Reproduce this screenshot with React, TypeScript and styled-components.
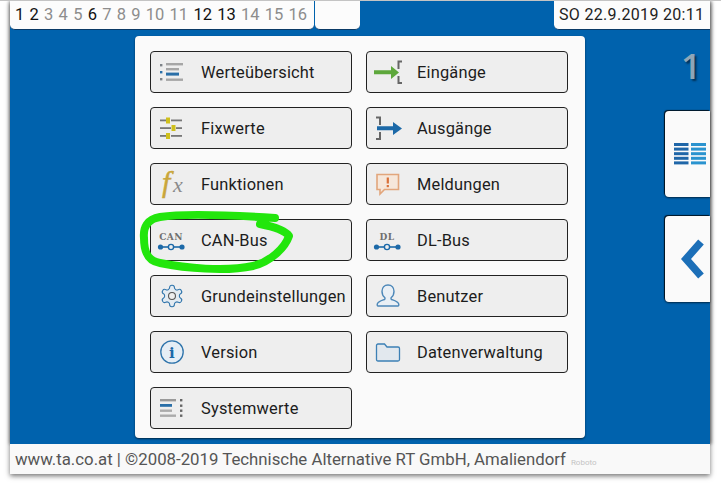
import styled, { createGlobalStyle } from 'styled-components'
import type { ReactNode } from 'react'

const Global = createGlobalStyle`
  html, body { margin: 0; padding: 0; background: #fff; }
  body { font-family: Roboto, 'Liberation Sans', sans-serif; }
`

const Page = styled.div`
  width: 721px;
  height: 486px;
  overflow: hidden;
  position: relative;
  background: #fff;
  border-top: 1px solid #c4c4c4;
  box-sizing: border-box;
`

const Device = styled.div`
  width: 700px;
  margin-left: 10px;
  box-shadow: 0 2px 5px rgba(0, 0, 0, 0.55);
`

const Screen = styled.div`
  height: 443px;
  background: #0062ad;
  display: flex;
  flex-direction: column;
  box-shadow: -1px 0 3px rgba(0, 0, 0, 0.3), 2px 0 3px rgba(0, 0, 0, 0.35);
`

const TopBar = styled.div`
  display: flex;
  height: 29px;
  gap: 1px;
  flex-shrink: 0;
`

const Tab = styled.div<{ $w: number }>`
  width: ${p => p.$w}px;
  box-sizing: border-box;
  background: #fcfcfc;
  border-radius: 0 0 5px 5px;
  border-bottom: 1px solid #0a3a66;
  display: flex;
  align-items: center;
  padding: 0 0 2px 5px;
  font-size: 16.5px;
  gap: 5.25px;
  color: #111;
`

const PageNo = styled.span<{ $on?: boolean }>`
  color: ${p => (p.$on ? '#111' : '#8d8d8d')};
`

const DateTab = styled(Tab)`
  margin-left: auto;
  padding-left: 5px;
  font-size: 16px;
  letter-spacing: 0.02em;
  color: #222;
  border-radius: 0 0 0 5px;
`

const Body = styled.div`
  flex: 1;
  display: flex;
  padding-top: 6px;
`

const Panel = styled.div`
  margin-left: 125px;
  width: 450px;
  height: 402px;
  box-sizing: border-box;
  background: #fafafa;
  border-radius: 4px;
  box-shadow: 0 1px 2px rgba(0, 0, 0, 0.6);
  padding: 15px;
  display: grid;
  grid-template-columns: 202px 202px;
  grid-auto-rows: 42px;
  column-gap: 14px;
  row-gap: 14px;
`

const MenuButton = styled.div`
  box-sizing: border-box;
  background: #eeeeee;
  border: 1px solid #222;
  border-radius: 4px;
  display: flex;
  align-items: center;
  font-size: 16.4px;
  letter-spacing: 0.012em;
  color: #1c1c1c;
  white-space: nowrap;
`

const IconSlot = styled.span`
  width: 42px;
  height: 40px;
  margin-right: 8px;
  flex-shrink: 0;
  display: flex;
  align-items: center;
  justify-content: center;

  svg { overflow: visible; }
`

const Side = styled.div`
  margin-left: auto;
  width: 46px;
  display: flex;
  flex-direction: column;
  align-items: flex-end;
`

const SideNumber = styled.div`
  width: 46px;
  height: 75px;
  box-sizing: border-box;
  padding: 10px 9px 0 0;
  text-align: right;
  font-size: 35px;
  font-weight: 600;
  line-height: 40px;
  color: #8fa6b8;
  font-family: 'Open Sans', Roboto, sans-serif;
  text-shadow: 2px 2px 2px rgba(0, 0, 0, 0.5);
`

const SideButton = styled.div<{ $inset: number }>`
  width: 45px;
  height: 86px;
  box-sizing: border-box;
  padding-left: ${p => p.$inset}px;
  margin-bottom: 19px;
  background: #fafafa;
  border-radius: 4px 0 0 4px;
  box-shadow: -1px -1px 1px rgba(0, 0, 0, 0.8), 0 1px 2px rgba(0, 0, 0, 0.6);
  display: flex;
  align-items: center;
  justify-content: center;
`

const Footer = styled.div`
  height: 30px;
  box-sizing: border-box;
  background: #f9f9f9;
  display: flex;
  align-items: baseline;
  padding: 5px 0 0 5px;
  font-size: 16.8px;
  color: #555;
  white-space: nowrap;
`

const FooterNote = styled.span`
  margin-left: 5px;
  font-size: 8px;
  color: #c4c4c4;
`

const Scribble = styled.svg`
  position: absolute;
  left: 135px;
  top: 205px;
  pointer-events: none;
`

const ListIcon = () => (
  <svg width="32" height="24" viewBox="0 0 32 24">
    <g fill="#7d8388">
      <rect x="4" y="4" width="2.4" height="2.4" />
      <rect x="4" y="11" width="2.4" height="2.4" fill="#2a6fa8" />
      <rect x="4" y="18" width="2.4" height="2.4" />
    </g>
    <rect x="10" y="3" width="17" height="2.4" fill="#a6a6a6" />
    <rect x="10" y="8" width="13" height="2.4" fill="#a6a6a6" />
    <rect x="10" y="12.6" width="13" height="3" fill="#2a6fa8" />
    <rect x="10" y="18.5" width="17" height="2.4" fill="#a6a6a6" />
  </svg>
)

const SlidersIcon = () => (
  <svg width="32" height="24" viewBox="0 0 32 24">
    <g fill="#777">
      <rect x="4" y="3.5" width="6" height="1.8" /><rect x="15" y="3.5" width="11" height="1.8" />
      <rect x="4" y="11.2" width="11" height="1.8" /><rect x="20" y="11.2" width="6" height="1.8" />
      <rect x="4" y="19" width="6" height="1.8" /><rect x="15" y="19" width="11" height="1.8" />
    </g>
    <g fill="#cfc01c">
      <rect x="10" y="1.5" width="4" height="6" /><rect x="15.5" y="9" width="4" height="6" /><rect x="10" y="17" width="4" height="6" />
    </g>
  </svg>
)

const FxIcon = () => (
  <svg width="36" height="34" viewBox="0 0 36 34">
    <text x="8" y="25" fontFamily="'Liberation Serif', serif" fontStyle="italic" fontSize="30" fill="#c9a63a" stroke="#c9a63a" strokeWidth="0.5">f</text>
    <text x="19" y="25" fontFamily="'Liberation Serif', serif" fontStyle="italic" fontSize="22" fill="#8b8b8b">x</text>
  </svg>
)

const BusIcon = ({ label }: { label: string }) => (
  <svg width="32" height="28" viewBox="0 0 32 28">
    <text x="15" y="14" textAnchor="middle" fontFamily="'DejaVu Serif', serif" fontWeight="bold" fontSize="9" letterSpacing="0.4" fill="#6f6f6f">{label}</text>
    <line x1="4" y1="21" x2="26" y2="21" stroke="#1c69a8" strokeWidth="1.6" />
    <circle cx="4.5" cy="21" r="2.6" fill="#1c69a8" />
    <circle cx="26" cy="21" r="2.6" fill="#1c69a8" />
    <circle cx="15" cy="21" r="2.6" fill="#eee" stroke="#1c69a8" strokeWidth="1.4" />
  </svg>
)

const GearIcon = () => (
  <svg width="26" height="26" viewBox="0 0 24 24" fill="#e3ebf2" stroke="#2f74ab" strokeWidth="1" strokeLinejoin="round">
    <path d="M12.2 2h-.4a2 2 0 0 0-2 2v.2a2 2 0 0 1-1 1.7l-.4.3a2 2 0 0 1-2 0l-.2-.1a2 2 0 0 0-2.7.7l-.2.4a2 2 0 0 0 .7 2.7l.2.1a2 2 0 0 1 1 1.7v.5a2 2 0 0 1-1 1.7l-.2.1a2 2 0 0 0-.7 2.7l.2.4a2 2 0 0 0 2.7.7l.2-.1a2 2 0 0 1 2 0l.4.3a2 2 0 0 1 1 1.7v.2a2 2 0 0 0 2 2h.4a2 2 0 0 0 2-2v-.2a2 2 0 0 1 1-1.7l.4-.3a2 2 0 0 1 2 0l.2.1a2 2 0 0 0 2.7-.7l.2-.4a2 2 0 0 0-.7-2.7l-.2-.1a2 2 0 0 1-1-1.7v-.5a2 2 0 0 1 1-1.7l.2-.1a2 2 0 0 0 .7-2.7l-.2-.4a2 2 0 0 0-2.7-.7l-.2.1a2 2 0 0 1-2 0l-.4-.3a2 2 0 0 1-1-1.7V4a2 2 0 0 0-2-2Z" />
    <circle cx="12" cy="12" r="3.2" fill="#eee" stroke="#555" />
  </svg>
)

const InfoIcon = () => (
  <svg width="26" height="26" viewBox="0 0 26 26">
    <circle cx="13" cy="13" r="11.2" fill="#e6eef5" stroke="#2f74ab" strokeWidth="1.3" />
    <text x="13" y="19" textAnchor="middle" fontFamily="'DejaVu Serif', serif" fontWeight="bold" fontSize="15" fill="#1c69a8">i</text>
  </svg>
)

const SystemIcon = () => (
  <svg width="32" height="24" viewBox="0 0 32 24">
    <rect x="4" y="3" width="16" height="2.4" fill="#999" />
    <rect x="4" y="8" width="12" height="2.8" fill="#2a6fa8" />
    <rect x="4" y="13.5" width="12" height="2.4" fill="#aaa" />
    <rect x="4" y="18.5" width="16" height="2.4" fill="#aaa" />
    <g fill="#666">
      <rect x="24" y="3" width="2.4" height="2.4" /><rect x="24" y="8.5" width="2.4" height="2.4" />
      <rect x="24" y="13.5" width="2.4" height="2.4" /><rect x="24" y="18.5" width="2.4" height="2.4" />
    </g>
  </svg>
)

const InIcon = () => (
  <svg width="36" height="28" viewBox="0 0 36 28">
    <path d="M32 3.5h-3.5V11M28.5 18v7h3.5" fill="none" stroke="#666" strokeWidth="2" />
    <path d="M4 12.3h17V8l8 6.5-8 6.5v-4.7H4Z" fill="#5ea83c" />
  </svg>
)

const OutIcon = () => (
  <svg width="36" height="28" viewBox="0 0 36 28">
    <path d="M6 3.5h4V11M10 18v7H6" fill="none" stroke="#666" strokeWidth="2" />
    <path d="M7 12.3h16V8l9 6.5-9 6.5v-4.700H7Z" fill="#1c69a8" />
  </svg>
)

const MessageIcon = () => (
  <svg width="28" height="26" viewBox="0 0 28 26">
    <path d="M3 3.5h21.5v15H10.500L6 23v-4.500H3Z" fill="#f6e7da" stroke="#e2a67c" strokeWidth="1.6" />
    <rect x="12.7" y="6.5" width="2.2" height="6" fill="#d9713a" />
    <rect x="12.7" y="14" width="2.2" height="2.2" fill="#d9713a" />
  </svg>
)

const UserIcon = () => (
  <svg width="28" height="28" viewBox="0 0 28 28">
    <path d="M14 3c3.6 0 6 2.6 6 6.3 0 2.6-1.2 5-2.7 6.2-.5.5-.4 1.600.4 2 2.600 1 6 2 6.800 4 .5 1.200.4 2.500-.4 2.500H3.900c-.8 0-.9-1.300-.4-2.500.8-2 4.200-3 6.800-4 .8-.4.9-1.500.4-2C9.200 14.300 8 11.900 8 9.300 8 5.600 10.400 3 14 3Z" fill="#e9eff5" stroke="#4c87b8" strokeWidth="1.4" />
  </svg>
)

const FolderIcon = () => (
  <svg width="28" height="24" viewBox="0 0 28 24">
    <path d="M2.500 5.500c0-1 .6-1.500 1.500-1.500h6.500l2.500 3h11c1 0 1.500.6 1.500 1.500v11c0 1-.6 1.500-1.500 1.500H4c-1 0-1.500-.6-1.500-1.500Z" fill="#e2e8ee" stroke="#3d80b5" strokeWidth="1.3" />
  </svg>
)

const GridIcon = () => (
  <svg width="32" height="22" viewBox="0 0 32 22">
    {[0, 4.6, 9.2, 13.8, 18.4].map(y => (
      <g key={y}>
        <rect x="0" y={y} width="14.5" height="3" fill="#1f66a8" />
        <rect x="17" y={y} width="15" height="3" fill="#2a93cf" />
      </g>
    ))}
  </svg>
)

const ChevronIcon = () => (
  <svg width="26" height="40" viewBox="0 0 26 40">
    <path d="M21 3 6 20l15 17" fill="none" stroke="#1c6fb8" strokeWidth="7.5" />
  </svg>
)

const ACTIVE_PAGES = [1, 2, 6, 12, 13]

const menu: { label: string; icon: ReactNode }[] = [
  { label: 'Werteübersicht', icon: <ListIcon /> },
  { label: 'Eingänge', icon: <InIcon /> },
  { label: 'Fixwerte', icon: <SlidersIcon /> },
  { label: 'Ausgänge', icon: <OutIcon /> },
  { label: 'Funktionen', icon: <FxIcon /> },
  { label: 'Meldungen', icon: <MessageIcon /> },
  { label: 'CAN-Bus', icon: <BusIcon label="CAN" /> },
  { label: 'DL-Bus', icon: <BusIcon label="DL" /> },
  { label: 'Grundeinstellungen', icon: <GearIcon /> },
  { label: 'Benutzer', icon: <UserIcon /> },
  { label: 'Version', icon: <InfoIcon /> },
  { label: 'Datenverwaltung', icon: <FolderIcon /> },
  { label: 'Systemwerte', icon: <SystemIcon /> },
]

export default function App() {
  return (
    <Page>
      <Global />
      <Device>
        <Screen>
          <TopBar>
            <Tab $w={304}>
              {Array.from({ length: 16 }, (_, i) => i + 1).map(n => (
                <PageNo key={n} $on={ACTIVE_PAGES.includes(n)}>{n}</PageNo>
              ))}
            </Tab>
            <Tab $w={45} />
            <DateTab $w={156}>SO 22.9.2019 20:11</DateTab>
          </TopBar>
          <Body>
            <Panel>
              {menu.map(m => (
                <MenuButton key={m.label}>
                  <IconSlot>{m.icon}</IconSlot>
                  {m.label}
                </MenuButton>
              ))}
            </Panel>
            <Side>
              <SideNumber>1</SideNumber>
              <SideButton $inset={5}><GridIcon /></SideButton>
              <SideButton $inset={11}><ChevronIcon /></SideButton>
            </Side>
          </Body>
        </Screen>
        <Footer>
          www.ta.co.at | ©2008-2019 Technische Alternative RT GmbH, Amaliendorf
          <FooterNote>Roboto</FooterNote>
        </Footer>
      </Device>
      <Scribble width="170" height="70" viewBox="0 0 170 70">
        <path
          d="M140 12C110 10 50 7 25 11 12 13 8 22 9 32c0 13 3 23 16 25 25 5 65 9 93 3 17-4 32-18 36-30-4-6-19-10-29-12"
          fill="none"
          stroke="#22e60c"
          strokeWidth="8"
          strokeLinecap="round"
          strokeLinejoin="round"
        />
      </Scribble>
    </Page>
  )
}
